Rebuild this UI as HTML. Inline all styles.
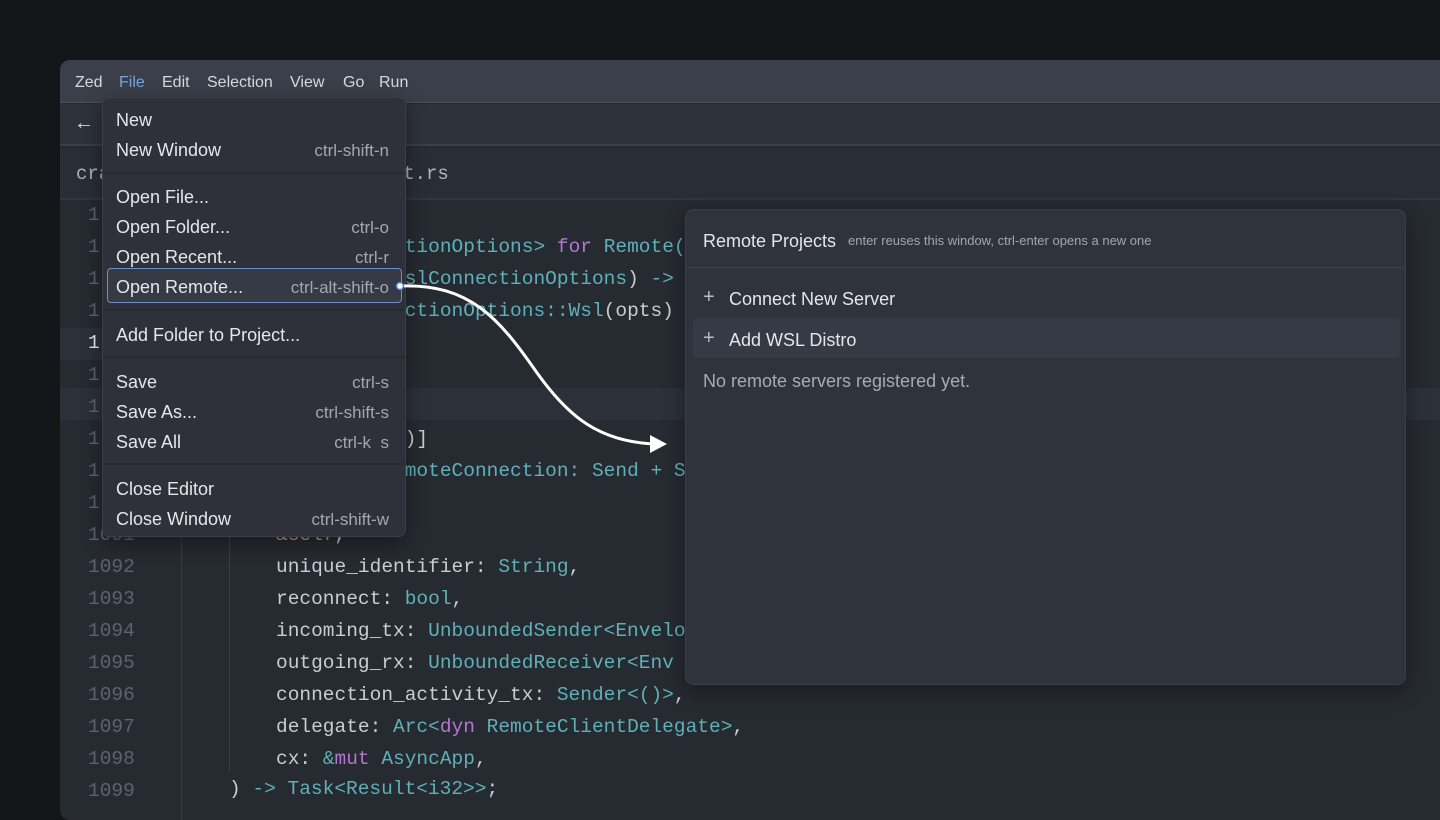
<!DOCTYPE html>
<html><head><meta charset="utf-8"><style>
*{margin:0;padding:0;box-sizing:border-box}
body{width:1440px;height:810px;overflow:hidden;background:#141518;font-family:"Liberation Sans",sans-serif;position:relative}
.abs{position:absolute}
.win{left:60px;top:60px;width:1400px;height:760px;background:#262a31;border-radius:10px;overflow:hidden}
.title{left:0;top:0;width:100%;height:43px;background:#3a3f49;border-bottom:1px solid #4a4f59}
.menu-t{top:14px;font-size:16px;color:#d6d9de}
.tool{left:0;top:44px;width:100%;height:42px;background:#2e323b;border-bottom:2px solid #3a3f48}
.tabs{left:0;top:88px;width:100%;height:52px;background:#292d35;border-bottom:2px solid #32363e}
.mono{font-family:"Liberation Mono",monospace;font-size:19.5px;white-space:pre;line-height:32px}
.ln{color:#5d636d;left:28px}
.c{color:#c8ccd3}.t{color:#5fb0b7}.k{color:#b477cf}.o{color:#bf956a}
.dd{left:102px;top:97px;width:304px;height:440px;background:#2e3139;border:1px solid #3a3e46;border-radius:7px;box-shadow:0 6px 20px rgba(0,0,0,.4)}
.it{position:absolute;left:13px;font-size:18px;color:#e4e6ea}
.sc{position:absolute;right:16px;font-size:17px;color:#a2a7b0}
.sep{position:absolute;left:0;width:100%;height:2px;background:#272a31}
.rp{left:685px;top:209px;width:721px;height:476px;background:#2f333c;border:1px solid #3a3e47;border-radius:9px;box-shadow:0 6px 20px rgba(0,0,0,.35)}
</style></head><body>
<div class="abs win">
 <div class="abs title">
  <span class="abs menu-t" style="left:15px">Zed</span>
  <span class="abs menu-t" style="left:59px;color:#73a6dc">File</span>
  <span class="abs menu-t" style="left:102px">Edit</span>
  <span class="abs menu-t" style="left:147px">Selection</span>
  <span class="abs menu-t" style="left:230px">View</span>
  <span class="abs menu-t" style="left:283px">Go</span>
  <span class="abs menu-t" style="left:319px">Run</span>
 </div>
 <div class="abs tool"><span class="abs" style="left:14px;top:8px;color:#d6d9de;font-size:20px">←</span></div>
 <div class="abs tabs"><span class="abs mono" style="left:16px;top:10px;color:#aeb2ba;font-size:19px">cra</span><span class="abs mono" style="left:309px;top:10px;color:#aeb2ba;font-size:19px">  nt.rs</span></div>
 <div class="abs" style="left:0;top:268px;width:60px;height:32px;background:#2c3038"></div>
 <div class="abs" style="left:0;top:328px;width:100%;height:32px;background:#2c3038"></div>
 <div class="abs" style="left:121px;top:140px;width:1px;height:620px;background:#363a42"></div>
 <div class="abs" style="left:169px;top:474px;width:1px;height:238px;background:#3a3e46"></div>
</div>
<div class="abs mono ln" style="left:88px;top:199px">1
1
1
1
<span style="color:#e6e8ec">1</span>
1
1
1
1
1
1091
1092
1093
1094
1095
1096
1097
1098
1099</div>
<div class="abs mono c" style="left:276px;top:199px">
           <span class="t">tionOptions&gt;</span> <span class="k">for</span> <span class="t">Remote(</span>
           <span class="t">slConnectionOptions</span>) <span class="t">-&gt;</span>
           <span class="t">ctionOptions::Wsl</span>(opts)



           )]
           <span class="t">moteConnection: Send + S</span>

<span class="o">&amp;self</span>,
unique_identifier: <span class="t">String</span>,
reconnect: <span class="t">bool</span>,
incoming_tx: <span class="t">UnboundedSender&lt;Envelo</span>
outgoing_rx: <span class="t">UnboundedReceiver&lt;Env</span>
connection_activity_tx: <span class="t">Sender&lt;()&gt;</span>,
delegate: <span class="t">Arc&lt;</span><span class="k">dyn</span> <span class="t">RemoteClientDelegate&gt;</span>,
cx: <span class="t">&amp;</span><span class="k">mut</span> <span class="t">AsyncApp</span>,</div>
<div class="abs mono c" style="left:229px;top:773px">) <span class="t">-&gt; Task&lt;Result&lt;i32&gt;&gt;</span>;</div>

<div class="abs dd">
 <span class="it" style="top:12px">New</span>
 <span class="it" style="top:42px">New Window</span><span class="sc" style="top:43px">ctrl-shift-n</span>
 <div class="sep" style="top:74px"></div>
 <span class="it" style="top:89px">Open File...</span>
 <span class="it" style="top:119px">Open Folder...</span><span class="sc" style="top:120px">ctrl-o</span>
 <span class="it" style="top:149px">Open Recent...</span><span class="sc" style="top:150px">ctrl-r</span>
 <div style="position:absolute;left:4px;top:170px;width:295px;height:35px;border:1.5px solid #6f8fc8;border-radius:4px;background:#363a44"></div>
 <span class="it" style="top:179px">Open Remote...</span><span class="sc" style="top:180px">ctrl-alt-shift-o</span>
 <div class="sep" style="top:211px"></div>
 <span class="it" style="top:227px">Add Folder to Project...</span>
 <div class="sep" style="top:258px"></div>
 <span class="it" style="top:274px">Save</span><span class="sc" style="top:275px">ctrl-s</span>
 <span class="it" style="top:304px">Save As...</span><span class="sc" style="top:305px">ctrl-shift-s</span>
 <span class="it" style="top:334px">Save All</span><span class="sc" style="top:335px">ctrl-k&nbsp; s</span>
 <div class="sep" style="top:365px"></div>
 <span class="it" style="top:381px">Close Editor</span>
 <span class="it" style="top:411px">Close Window</span><span class="sc" style="top:412px">ctrl-shift-w</span>
</div>

<div class="abs rp">
 <span class="abs" style="left:17px;top:21px;font-size:18px;color:#e4e6ea">Remote Projects</span>
 <span class="abs" style="left:162px;top:23px;font-size:13px;color:#a2a7b0">enter reuses this window, ctrl-enter opens a new one</span>
 <div class="abs" style="left:0;top:57px;width:100%;height:1px;background:#3c4049"></div>
 <span class="abs" style="left:17px;top:76px;font-size:20px;color:#b8bcc4">+</span>
 <span class="abs" style="left:43px;top:79px;font-size:18px;color:#e4e6ea">Connect New Server</span>
 <div class="abs" style="left:7px;top:108px;width:707px;height:40px;background:#363a44;border-radius:5px"></div>
 <span class="abs" style="left:17px;top:117px;font-size:20px;color:#b8bcc4">+</span>
 <span class="abs" style="left:43px;top:120px;font-size:18px;color:#e4e6ea">Add WSL Distro</span>
 <span class="abs" style="left:17px;top:161px;font-size:18px;color:#a7abb3">No remote servers registered yet.</span>
</div>

<svg class="abs" style="left:0;top:0" width="1440" height="810">
 <path d="M400 286 C470 283 500 320 535 370 C570 420 600 440 652 444" fill="none" stroke="#fff" stroke-width="3"/>
 <path d="M650 435 L667 444 L650 453 Z" fill="#fff"/>
 <circle cx="400" cy="286" r="3.5" fill="#fff" stroke="#4a7fd6" stroke-width="1.5"/>
</svg>
</body></html>
